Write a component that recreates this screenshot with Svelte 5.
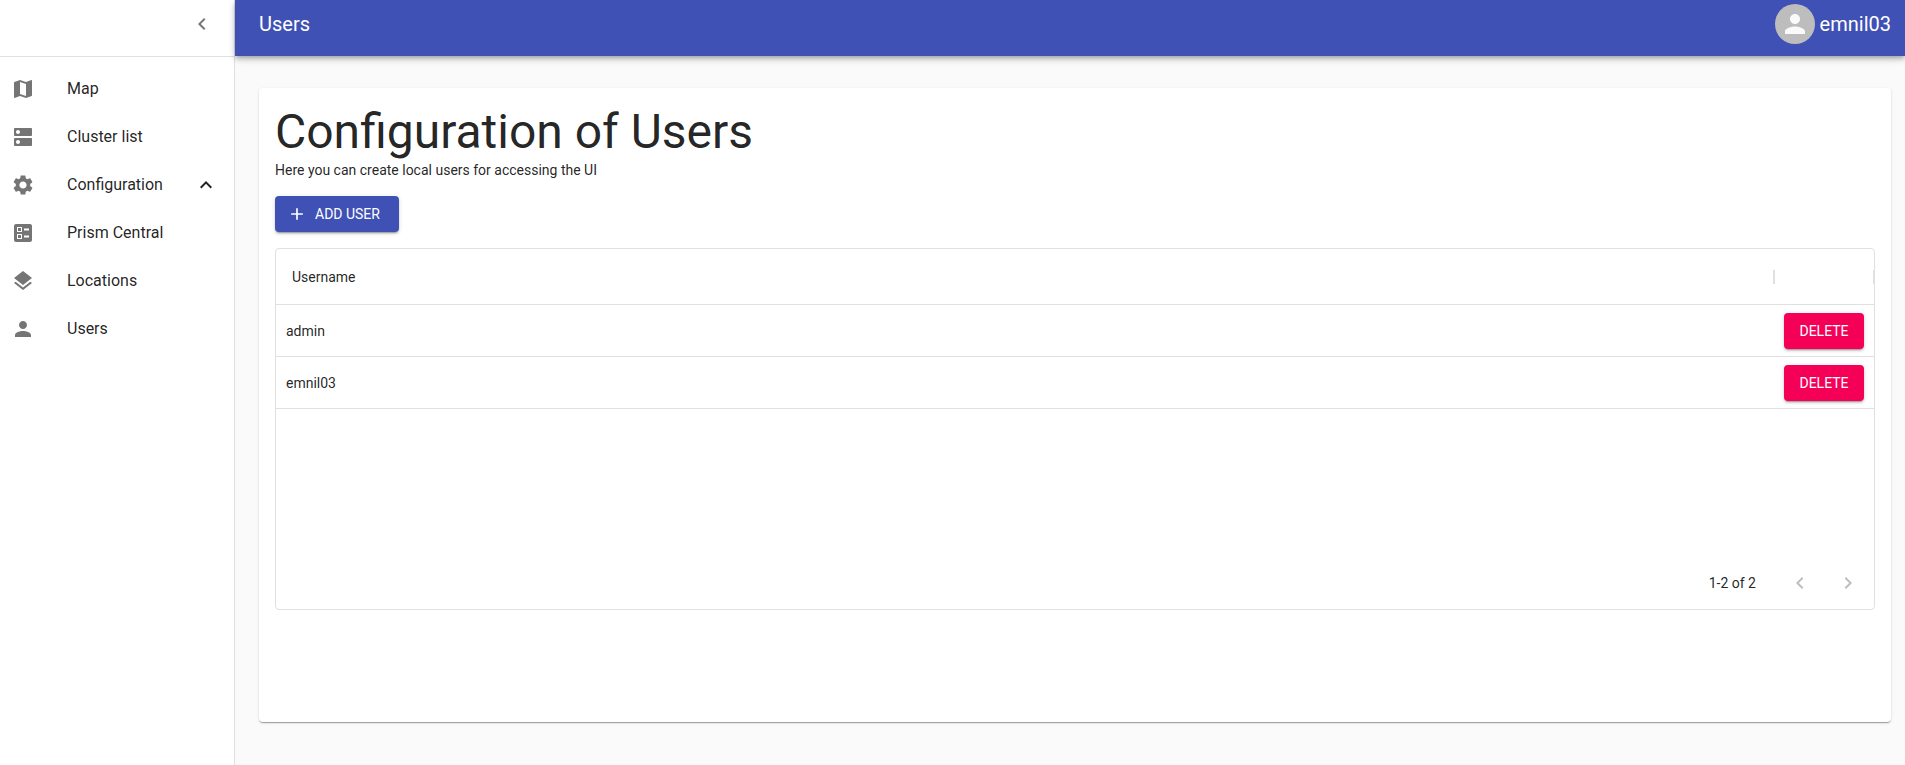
<script>
  const icons = {
    map: 'M20.5 3l-.16.03L15 5.1 9 3 3.36 4.9c-.21.07-.36.25-.36.48V20.5c0 .28.22.5.5.5l.16-.03L9 18.9l6 2.1 5.64-1.9c.21-.07.36-.25.36-.48V3.5c0-.28-.22-.5-.5-.5zM15 19l-6-2.11V5l6 2.11V19z',
    dns: 'M20 13H4c-.55 0-1 .45-1 1v6c0 .55.45 1 1 1h16c.55 0 1-.45 1-1v-6c0-.55-.45-1-1-1zM7 19c-1.1 0-2-.9-2-2s.9-2 2-2 2 .9 2 2-.9 2-2 2zM20 3H4c-.55 0-1 .45-1 1v6c0 .55.45 1 1 1h16c.55 0 1-.45 1-1V4c0-.55-.45-1-1-1zM7 9c-1.1 0-2-.9-2-2s.9-2 2-2 2 .9 2 2-.9 2-2 2z',
    settings: 'M19.14 12.94c.04-.3.06-.61.06-.94 0-.32-.02-.64-.07-.94l2.03-1.58c.18-.14.23-.41.12-.61l-1.92-3.32c-.12-.22-.37-.29-.59-.22l-2.39.96c-.5-.38-1.03-.7-1.62-.94l-.36-2.54c-.04-.24-.24-.41-.48-.41h-3.84c-.24 0-.43.17-.47.41l-.36 2.54c-.59.24-1.13.57-1.62.94l-2.39-.96c-.22-.08-.47 0-.59.22L2.74 8.87c-.12.21-.08.47.12.61l2.03 1.58c-.05.3-.09.63-.09.94s.02.64.07.94l-2.03 1.58c-.18.14-.23.41-.12.61l1.92 3.32c.12.22.37.29.59.22l2.39-.96c.5.38 1.03.7 1.62.94l.36 2.54c.05.24.24.41.48.41h3.84c.24 0 .44-.17.47-.41l.36-2.54c.59-.24 1.13-.56 1.62-.94l2.39.96c.22.08.47 0 .59-.22l1.92-3.32c.12-.22.07-.47-.12-.61l-2.01-1.58zM12 15.6c-1.98 0-3.6-1.62-3.6-3.6s1.62-3.6 3.6-3.6 3.6 1.62 3.6 3.6-1.62 3.6-3.6 3.6z',
    ballot: 'M13 9.5h5v-2h-5v2zm0 7h5v-2h-5v2zm6 4.5H5c-1.1 0-2-.9-2-2V5c0-1.1.9-2 2-2h14c1.1 0 2 .9 2 2v14c0 1.1-.9 2-2 2zM6 11h5V6H6v5zm1-4h3v3H7V7zM6 18h5v-5H6v5zm1-4h3v3H7v-3z',
    layers: 'M11.99 18.54l-7.37-5.73L3 14.07l9 7 9-7-1.63-1.27-7.38 5.74zM12 16l7.36-5.73L21 9l-9-7-9 7 1.63 1.27L12 16z',
    person: 'M12 12c2.21 0 4-1.79 4-4s-1.79-4-4-4-4 1.79-4 4 1.79 4 4 4zm0 2c-2.67 0-8 1.34-8 4v2h16v-2c0-2.66-5.33-4-8-4z',
    left: 'M15.41 7.41L14 6l-6 6 6 6 1.41-1.41L10.83 12z',
    right: 'M10 6L8.59 7.41 13.17 12l-4.58 4.59L10 18l6-6z',
    up: 'M12 8l-6 6 1.41 1.41L12 10.83l4.59 4.58L18 14z',
    add: 'M19 13h-6v6h-2v-6H5v-2h6V5h2v6h6v2z'
  };

  const links = [
    { label: 'Map', icon: 'map' },
    { label: 'Cluster list', icon: 'dns' },
    { label: 'Configuration', icon: 'settings', expandable: true },
    { label: 'Prism Central', icon: 'ballot' },
    { label: 'Locations', icon: 'layers' },
    { label: 'Users', icon: 'person' }
  ];

  const users = ['admin', 'emnil03'];
</script>

{#snippet icon(name)}
  <svg class="icon" viewBox="0 0 24 24" aria-hidden="true"><path fill-rule="evenodd" d={icons[name]} /></svg>
{/snippet}

<div class="layout">
  <aside class="sidebar">
    <div class="sidebar-top">
      <button class="icon-button collapse" aria-label="Collapse menu">{@render icon('left')}</button>
    </div>
    <nav>
      {#each links as link}
        {#if link.expandable}
          <button class="nav-item" aria-expanded="true">
            <span class="nav-icon">{@render icon(link.icon)}</span>
            <span class="nav-label">{link.label}</span>
            {@render icon('up')}
          </button>
        {:else}
          <a class="nav-item" href="#{link.icon}">
            <span class="nav-icon">{@render icon(link.icon)}</span>
            <span class="nav-label">{link.label}</span>
          </a>
        {/if}
      {/each}
    </nav>
  </aside>

  <div class="page">
    <header class="app-bar">
      <div class="toolbar">
        <span>Users</span>
        <div class="account">
          <span class="avatar">{@render icon('person')}</span>
          <span>emnil03</span>
        </div>
      </div>
    </header>

    <main class="card">
      <h1>Configuration of Users</h1>
      <p>Here you can create local users for accessing the UI</p>
      <button class="button primary">{@render icon('add')}ADD USER</button>

      <section class="grid">
        <table>
          <thead>
            <tr>
              <th scope="col"><div class="head-cell">Username<span class="separator"></span></div></th>
              <th scope="col" class="actions" aria-label="Actions"><div class="head-cell"><span class="separator last"></span></div></th>
            </tr>
          </thead>
          <tbody>
            {#each users as user}
              <tr>
                <td>{user}</td>
                <td class="actions"><button class="button danger">DELETE</button></td>
              </tr>
            {/each}
          </tbody>
        </table>
        <footer class="pager">
          <span class="range">1-2 of 2</span>
          <button class="icon-button" disabled aria-label="Previous page">{@render icon('left')}</button>
          <button class="icon-button" disabled aria-label="Next page">{@render icon('right')}</button>
        </footer>
      </section>
    </main>
  </div>
</div>

<style>
  :global(body) {
    background: #fafafa;
  }

  .layout, .layout * {
    box-sizing: border-box;
  }

  .layout {
    display: flex;
    min-height: 100vh;
    font: 400 14px/20px Roboto, "Liberation Sans", sans-serif;
    color: rgba(0, 0, 0, 0.87);
  }

  button {
    border: 0;
    padding: 0;
    background: none;
    font: inherit;
    color: inherit;
    cursor: pointer;
  }

  .icon {
    display: block;
    flex: none;
    width: 24px;
    height: 24px;
    fill: currentColor;
  }

  .sidebar {
    flex: none;
    width: 235px;
    background: #fff;
    border-right: 1px solid #e0e0e0;
  }

  .sidebar-top {
    display: flex;
    justify-content: flex-end;
    height: 57px;
    padding-right: 8px;
    border-bottom: 1px solid #e0e0e0;
  }

  .icon-button {
    display: grid;
    place-items: center;
    width: 48px;
    height: 48px;
    color: rgba(0, 0, 0, 0.54);
  }

  .icon-button:disabled {
    color: rgba(0, 0, 0, 0.26);
    cursor: default;
  }

  nav {
    padding: 8px 0;
  }

  .nav-item {
    display: flex;
    align-items: center;
    width: 100%;
    height: 48px;
    padding: 0 16px 0 11px;
    font-size: 16px;
    line-height: 24px;
    text-align: left;
    text-decoration: none;
    color: inherit;
  }

  .nav-icon {
    flex: none;
    width: 56px;
    color: rgba(0, 0, 0, 0.54);
  }

  .nav-label {
    flex: 1;
  }

  .page {
    flex: 1;
    min-width: 0;
    display: flex;
    flex-direction: column;
  }

  .app-bar {
    height: 56px;
    color: #fff;
    background: #3f51b5;
    box-shadow: 0 2px 4px -1px rgba(0, 0, 0, 0.2), 0 4px 5px 0 rgba(0, 0, 0, 0.14), 0 1px 10px 0 rgba(0, 0, 0, 0.12);
    clip-path: inset(0 0 -20px -6px);
  }

  .toolbar {
    display: flex;
    align-items: center;
    justify-content: space-between;
    height: 48px;
    padding: 0 14px 0 24px;
    font-size: 20px;
    line-height: 32px;
  }

  .account {
    display: flex;
    align-items: center;
    gap: 5px;
  }

  .avatar {
    display: grid;
    place-items: center;
    width: 40px;
    height: 40px;
    border-radius: 50%;
    color: #fafafa;
    background: #bdbdbd;
  }

  .avatar .icon {
    width: 30px;
    height: 30px;
  }

  .card {
    flex: 1;
    margin: 32px 14px 43px 24px;
    padding: 16px;
    border-radius: 4px;
    background: #fff;
    box-shadow: 0 2px 1px -1px rgba(0, 0, 0, 0.2), 0 1px 1px 0 rgba(0, 0, 0, 0.14), 0 1px 3px 0 rgba(0, 0, 0, 0.12);
  }

  h1 {
    margin: 0;
    font-size: 48px;
    font-weight: 400;
    line-height: 56px;
  }

  p {
    margin: 0 0 16px;
  }

  .button {
    display: flex;
    align-items: center;
    justify-content: center;
    gap: 8px;
    height: 36px;
    border-radius: 4px;
    color: #fff;
    box-shadow: 0 3px 1px -2px rgba(0, 0, 0, 0.2), 0 2px 2px 0 rgba(0, 0, 0, 0.14), 0 1px 5px 0 rgba(0, 0, 0, 0.12);
  }

  .primary {
    justify-content: flex-start;
    min-width: 124px;
    padding: 0 16px 0 12px;
    background: #3f51b5;
  }

  .primary .icon {
    width: 20px;
    height: 20px;
  }

  .danger {
    width: 80px;
    background: #f50057;
  }

  .grid {
    display: flex;
    flex-direction: column;
    min-height: 362px;
    margin-top: 16px;
    border: 1px solid #e0e0e0;
    border-radius: 4px;
  }

  table {
    width: 100%;
    border-collapse: separate;
    border-spacing: 0;
    table-layout: fixed;
  }

  th, td {
    height: 52px;
    padding: 0 10px;
    border-bottom: 1px solid #e0e0e0;
    text-align: left;
    font-weight: 400;
  }

  th {
    height: 56px;
    padding: 0 0 0 16px;
  }

  .actions {
    width: 99px;
    padding-left: 9px;
  }

  .head-cell {
    display: flex;
    align-items: center;
    justify-content: space-between;
  }

  .separator {
    width: 2px;
    height: 14px;
    margin-left: auto;
    background: #e0e0e0;
  }

  .separator.last {
    width: 1px;
  }

  .pager {
    display: flex;
    align-items: center;
    justify-content: flex-end;
    height: 52px;
    margin-top: auto;
    padding-right: 2px;
  }

  .range {
    margin-right: 20px;
  }
</style>
